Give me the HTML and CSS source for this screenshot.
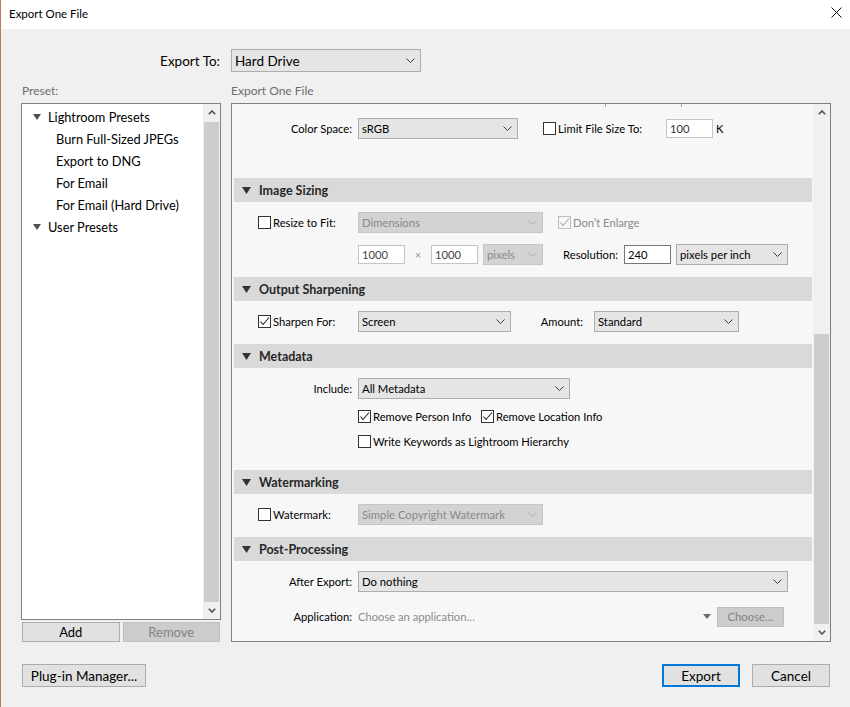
FILE: index.html
```html
<!DOCTYPE html>
<html>
<head>
<meta charset="utf-8">
<title>Export One File</title>
<link rel="stylesheet" href="styles.css">
</head>
<body>
<div class="window">
  <header class="titlebar">
    <span class="title">Export One File</span>
    <svg class="close" width="11" height="11" viewBox="0 0 11 11"><path d="M0.5 0.5 L10.5 10.5 M10.5 0.5 L0.5 10.5" stroke="#111" stroke-width="1" fill="none"/></svg>
  </header>
  <div class="content">
    <div class="export-to">
      <span class="export-label">Export To:</span>
      <div class="select export-select"><span>Hard Drive</span><svg class="chev" width="9" height="5" viewBox="0 0 9 5"><polyline points="0.5,0.5 4.5,4.5 8.5,0.5" fill="none" stroke="currentColor"/></svg></div>
    </div>
    <div class="captions">
      <span class="caption preset-cap">Preset:</span>
      <span class="caption">Export One File</span>
    </div>
    <div class="main">
      <div class="left-col">
        <div class="listbox">
          <ul class="tree">
            <li class="group"><svg class="tree-tri" width="8" height="6" viewBox="0 0 8 6"><polygon points="0,0 8,0 4,6" fill="#505050"/></svg>Lightroom Presets</li>
            <li class="child">Burn Full-Sized JPEGs</li>
            <li class="child">Export to DNG</li>
            <li class="child">For Email</li>
            <li class="child">For Email (Hard Drive)</li>
            <li class="group"><svg class="tree-tri" width="8" height="6" viewBox="0 0 8 6"><polygon points="0,0 8,0 4,6" fill="#505050"/></svg>User Presets</li>
          </ul>
          <div class="vscroll list-scroll">
            <div class="sb-btn"><svg width="8" height="5" viewBox="0 0 8 5"><polyline points="0.8,4.2 4,1 7.2,4.2" fill="none" stroke="#505050" stroke-width="1.6"/></svg></div>
            <div class="sb-track"><div class="sb-thumb full"></div></div>
            <div class="sb-btn"><svg width="8" height="5" viewBox="0 0 8 5"><polyline points="0.8,0.8 4,4 7.2,0.8" fill="none" stroke="#505050" stroke-width="1.6"/></svg></div>
          </div>
        </div>
        <div class="list-buttons">
          <button class="btn small">Add</button>
          <button class="btn small disabled">Remove</button>
        </div>
      </div>

      <div class="panel">
        <div class="panel-body">
          <div class="ticks"><span class="tick t1"></span><span class="tick t2"></span></div>

          <div class="row row-first">
            <span class="lbl">Color Space:</span>
            <div class="select w160"><span>sRGB</span><svg class="chev" width="9" height="5" viewBox="0 0 9 5"><polyline points="0.5,0.5 4.5,4.5 8.5,0.5" fill="none" stroke="currentColor"/></svg></div>
            <span class="cb-group limit"><span class="cb"></span><span class="cb-text">Limit File Size To:</span></span>
            <span class="input w47">100</span>
            <span class="unit">K</span>
          </div>

          <div class="section-head sh-first"><svg class="head-tri" width="9" height="7" viewBox="0 0 9 7"><polygon points="0,0 9,0 4.5,7" fill="#333"/></svg>Image Sizing</div>
          <div class="row row-after-head">
            <span class="lbl lbl-cb"><span class="cb"></span><span class="cb-text">Resize to Fit:</span></span>
            <div class="select disabled w185"><span>Dimensions</span><svg class="chev" width="9" height="5" viewBox="0 0 9 5"><polyline points="0.5,0.5 4.5,4.5 8.5,0.5" fill="none" stroke="currentColor"/></svg></div>
            <span class="cb-group enlarge"><span class="cb cb-disabled checked"><svg width="11" height="11" viewBox="0 0 11 11"><polyline points="1.5,5.5 4,8.5 10,1.5" fill="none" stroke="#a8a8a8" stroke-width="1.1"/></svg></span><span class="cb-text muted">Don’t Enlarge</span></span>
          </div>
          <div class="row row-next">
            <span class="lbl"></span>
            <span class="input w47 light">1000</span>
            <span class="times">×</span>
            <span class="input w47 light">1000</span>
            <div class="select disabled w60 ml5"><span>pixels</span><svg class="chev" width="9" height="5" viewBox="0 0 9 5"><polyline points="0.5,0.5 4.5,4.5 8.5,0.5" fill="none" stroke="currentColor"/></svg></div>
            <span class="lbl2 res">Resolution:</span>
            <span class="input w47 dark">240</span>
            <div class="select w112 ml5"><span>pixels per inch</span><svg class="chev" width="9" height="5" viewBox="0 0 9 5"><polyline points="0.5,0.5 4.5,4.5 8.5,0.5" fill="none" stroke="currentColor"/></svg></div>
          </div>

          <div class="section-head"><svg class="head-tri" width="9" height="7" viewBox="0 0 9 7"><polygon points="0,0 9,0 4.5,7" fill="#333"/></svg>Output Sharpening</div>
          <div class="row row-after-head">
            <span class="lbl lbl-cb"><span class="cb checked"><svg width="11" height="11" viewBox="0 0 11 11"><polyline points="1.5,5.5 4,8.5 10,1.5" fill="none" stroke="#222" stroke-width="1.1"/></svg></span><span class="cb-text">Sharpen For:</span></span>
            <div class="select w153"><span>Screen</span><svg class="chev" width="9" height="5" viewBox="0 0 9 5"><polyline points="0.5,0.5 4.5,4.5 8.5,0.5" fill="none" stroke="currentColor"/></svg></div>
            <span class="lbl2 amount">Amount:</span>
            <div class="select w145 ml5"><span>Standard</span><svg class="chev" width="9" height="5" viewBox="0 0 9 5"><polyline points="0.5,0.5 4.5,4.5 8.5,0.5" fill="none" stroke="currentColor"/></svg></div>
          </div>

          <div class="section-head"><svg class="head-tri" width="9" height="7" viewBox="0 0 9 7"><polygon points="0,0 9,0 4.5,7" fill="#333"/></svg>Metadata</div>
          <div class="row row-after-head">
            <span class="lbl">Include:</span>
            <div class="select w212"><span>All Metadata</span><svg class="chev" width="9" height="5" viewBox="0 0 9 5"><polyline points="0.5,0.5 4.5,4.5 8.5,0.5" fill="none" stroke="currentColor"/></svg></div>
          </div>
          <div class="row cb-row cb-row-1">
            <span class="lbl"></span>
            <span class="cb-group person"><span class="cb checked"><svg width="11" height="11" viewBox="0 0 11 11"><polyline points="1.5,5.5 4,8.5 10,1.5" fill="none" stroke="#222" stroke-width="1.1"/></svg></span><span class="cb-text">Remove Person Info</span></span>
            <span class="cb-group"><span class="cb checked"><svg width="11" height="11" viewBox="0 0 11 11"><polyline points="1.5,5.5 4,8.5 10,1.5" fill="none" stroke="#222" stroke-width="1.1"/></svg></span><span class="cb-text">Remove Location Info</span></span>
          </div>
          <div class="row cb-row cb-row-2">
            <span class="lbl"></span>
            <span class="cb-group"><span class="cb"></span><span class="cb-text">Write Keywords as Lightroom Hierarchy</span></span>
          </div>

          <div class="section-head sh-wide"><svg class="head-tri" width="9" height="7" viewBox="0 0 9 7"><polygon points="0,0 9,0 4.5,7" fill="#333"/></svg>Watermarking</div>
          <div class="row row-after-head">
            <span class="lbl lbl-cb"><span class="cb"></span><span class="cb-text">Watermark:</span></span>
            <div class="select disabled w185"><span>Simple Copyright Watermark</span><svg class="chev" width="9" height="5" viewBox="0 0 9 5"><polyline points="0.5,0.5 4.5,4.5 8.5,0.5" fill="none" stroke="currentColor"/></svg></div>
          </div>

          <div class="section-head"><svg class="head-tri" width="9" height="7" viewBox="0 0 9 7"><polygon points="0,0 9,0 4.5,7" fill="#333"/></svg>Post-Processing</div>
          <div class="row row-after-head">
            <span class="lbl">After Export:</span>
            <div class="select w430"><span>Do nothing</span><svg class="chev" width="9" height="5" viewBox="0 0 9 5"><polyline points="0.5,0.5 4.5,4.5 8.5,0.5" fill="none" stroke="currentColor"/></svg></div>
          </div>
          <div class="row app-row">
            <span class="lbl">Application:</span>
            <span class="app-text">Choose an application…</span>
            <svg class="app-tri" width="8" height="5" viewBox="0 0 8 5"><polygon points="0,0 8,0 4,5" fill="#6a6a6a"/></svg>
            <button class="btn choose disabled">Choose…</button>
          </div>
        </div>
        <div class="vscroll panel-scroll">
          <div class="sb-btn"><svg width="8" height="5" viewBox="0 0 8 5"><polyline points="0.8,4.2 4,1 7.2,4.2" fill="none" stroke="#505050" stroke-width="1.6"/></svg></div>
          <div class="sb-track"><div class="sb-thumb lower"></div></div>
          <div class="sb-btn"><svg width="8" height="5" viewBox="0 0 8 5"><polyline points="0.8,0.8 4,4 7.2,0.8" fill="none" stroke="#505050" stroke-width="1.6"/></svg></div>
        </div>
      </div>
    </div>

    <div class="footer">
      <button class="btn big plugin">Plug-in Manager...</button>
      <div class="footer-right">
        <button class="btn big primary">Export</button>
        <button class="btn big">Cancel</button>
      </div>
    </div>
  </div>
</div>
</body>
</html>
```

FILE: styles.css
```css
* { box-sizing: border-box; }
html, body { margin: 0; padding: 0; }
body {
  width: 850px;
  height: 707px;
  overflow: hidden;
  background: #f0f0f0;
  font-family: Lato, "Noto Sans", sans-serif;
  color: #000;
}
.window {
  width: 850px;
  height: 707px;
  border-left: 1px solid #c4775d;
  background: #f0f0f0;
}
.titlebar {
  height: 29px;
  background: #fff;
  display: flex;
  justify-content: space-between;
  padding: 0 8px;
}
.title { font-size: 11.5px; line-height: 27px; color: #000; }
.close { margin-top: 7px; }

.content { padding: 0 19px 0 20px; }

.export-to {
  display: flex;
  align-items: center;
  margin-top: 20px;
  height: 23px;
}
.export-label {
  width: 200px;
  text-align: right;
  font-size: 13.5px;
  padding-right: 1px;
}
.select {
  display: flex;
  align-items: center;
  justify-content: space-between;
  height: 21px;
  background: #e5e5e5;
  border: 1px solid #adadad;
  padding: 0 5px 0 3px;
  font-size: 11.3px;
  color: #000;
  flex: none;
  white-space: nowrap;
}
.select .chev { color: #3a3a3a; flex: none; }
.select.disabled { background: #d3d3d3; border-color: #c6c6c6; color: #888; }
.select.disabled .chev { color: #ababab; }
.export-select {
  margin-left: 10px;
  width: 190px;
  height: 23px;
  font-size: 13.5px;
}

.captions {
  display: flex;
  margin-top: 9px;
  height: 20px;
  line-height: 20px;
}
.caption { font-size: 12px; color: #6d6d6d; }
.preset-cap { width: 210px; padding-left: 1px; }

.main {
  display: flex;
  gap: 10px;
  margin-top: 2px;
  height: 539px;
}
.left-col { width: 200px; flex: none; }
.listbox {
  height: 517px;
  border: 1px solid #828282;
  background: #fff;
  display: flex;
}
.tree {
  flex: 1;
  list-style: none;
  margin: 0;
  padding: 2px 0 0 11px;
}
.tree li {
  height: 22px;
  display: flex;
  align-items: center;
  font-size: 12.8px;
  color: #000;
  white-space: nowrap;
}
.tree-tri { margin-right: 7px; flex: none; }
.tree .child { padding-left: 23px; }

.vscroll {
  width: 17px;
  flex: none;
  display: flex;
  flex-direction: column;
  background: #f0f0f0;
}
.sb-btn {
  height: 17px;
  flex: none;
  display: flex;
  align-items: center;
  justify-content: center;
}
.sb-track { flex: 1; display: flex; flex-direction: column; padding: 0 1px 0 1px; }
.sb-thumb { background: #cdcdcd; flex: 1; }
.sb-thumb.full { margin-top: 1px; }
.sb-thumb.lower { margin-top: 213px; }

.list-buttons {
  display: flex;
  gap: 3px;
  margin-top: 2px;
  padding: 0 1px;
}
.btn {
  font-family: inherit;
  background: #e1e1e1;
  border: 1px solid #adadad;
  color: #000;
  padding: 0;
  margin: 0;
  display: flex;
  align-items: center;
  justify-content: center;
  white-space: nowrap;
}
.btn.disabled { background: #cccccc; border-color: #bfbfbf; color: #838383; }
.btn.small { flex: 1; height: 20px; font-size: 13px; }
.btn.big { height: 23px; font-size: 13.5px; width: 78px; }
.btn.primary { border: 2px solid #0078d7; }

.panel {
  width: 600px;
  flex: none;
  height: 539px;
  border: 1px solid #7f7f7f;
  background: #f7f7f7;
  display: flex;
}
.panel-body { width: 581px; flex: none; }
.panel-scroll { background: #f0f0f0; }

.ticks { height: 4px; display: flex; }
.tick { width: 1px; height: 3px; background: #a3a3a3; }
.t1 { margin-left: 373px; }
.t2 { margin-left: 75px; }

.row {
  display: flex;
  align-items: center;
  height: 21px;
  font-size: 11.2px;
  white-space: nowrap;
}
.row-first { margin-top: 10px; }
.row-after-head { margin-top: 10px; }
.row-next { margin-top: 11px; }
.cb-row { height: 15px; margin-top: 10px; }

.lbl {
  width: 120px;
  flex: none;
  text-align: right;
  margin-right: 6px;
  color: #000;
}
.lbl-cb {
  display: flex;
  align-items: center;
  text-align: left;
  padding-left: 26px;
}
.lbl2 { flex: none; text-align: right; margin-right: 6px; }
.res { width: 75px; }
.amount { width: 72px; }

.cb {
  width: 13px;
  height: 13px;
  border: 1px solid #333;
  background: #fff;
  flex: none;
  display: flex;
  align-items: center;
  justify-content: center;
}
.cb-disabled { border-color: #bdbdbd; background: #f7f7f7; }
.cb-text { margin-left: 2px; }
.muted { color: #8a8a8a; }
.cb-group { display: flex; align-items: center; flex: none; }
.limit { width: 123px; margin-left: 25px; }
.enlarge { margin-left: 15px; }
.person { width: 123px; }

.input {
  height: 19px;
  background: #fff;
  border: 1px solid #c4c4c4;
  display: flex;
  align-items: center;
  padding-left: 3px;
  flex: none;
  color: #333;
}
.input.dark { border-color: #777; color: #000; }
.input.light { color: #444; }
.w47 { width: 47px; }
.unit { margin-left: 3px; }
.times { width: 26px; text-align: center; color: #9a9a9a; flex: none; }
.ml5 { margin-left: 5px; }
.w60 { width: 60px; }
.w112 { width: 112px; }
.w145 { width: 145px; }
.w153 { width: 153px; }
.w160 { width: 160px; }
.w185 { width: 185px; }
.w212 { width: 212px; }
.w430 { width: 430px; }

.section-head {
  height: 24px;
  margin: 12px 1px 0 2px;
  background: #d9d9d9;
  display: flex;
  align-items: center;
  padding-left: 8px;
  font-size: 12.5px;
  font-weight: bold;
  color: #262626;
}
.sh-first { margin-top: 39px; }
.sh-wide { margin-top: 21px; }
.head-tri { margin-right: 8px; flex: none; }

.app-row { margin-top: 14px; }
.app-text { width: 345px; flex: none; color: #8c8c8c; }
.app-tri { flex: none; }
.btn.choose { width: 67px; height: 20px; margin-left: 6px; font-size: 11.3px; }

.footer {
  display: flex;
  justify-content: space-between;
  margin-top: 22px;
  padding: 0 1px 0 1px;
}
.plugin { width: 124px !important; }
.footer-right { display: flex; gap: 12px; }
```
